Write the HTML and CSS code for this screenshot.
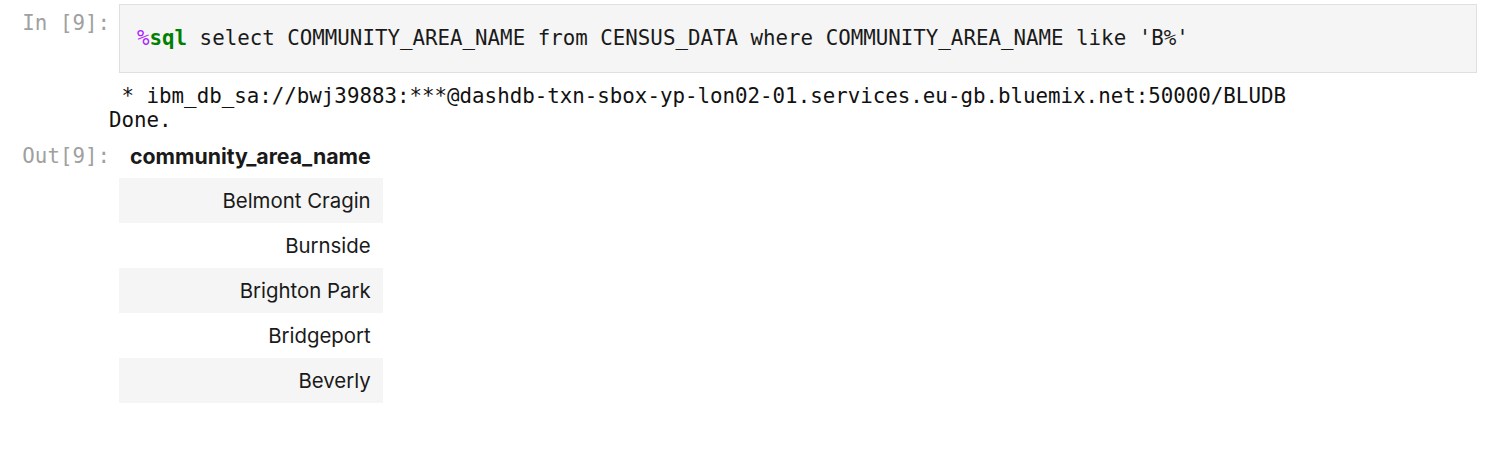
FILE: index.html
```html
<!DOCTYPE html>
<html lang="en">
<head>
<meta charset="utf-8">
<title>Notebook cell</title>
<link rel="stylesheet" href="styles.css">
</head>
<body>
<div class="cell">
  <div class="row input-row">
    <div class="prompt in-prompt">In&nbsp;[9]:</div>
    <div class="input-area"><pre class="code"><span class="cm-op">%</span><span class="cm-kw">sql</span> select COMMUNITY_AREA_NAME from CENSUS_DATA where COMMUNITY_AREA_NAME like 'B%'</pre></div>
  </div>
  <div class="row stream-row">
    <div class="prompt"></div>
    <pre class="stream"> * ibm_db_sa://bwj39883:***@dashdb-txn-sbox-yp-lon02-01.services.eu-gb.bluemix.net:50000/BLUDB
Done.</pre>
  </div>
  <div class="row result-row">
    <div class="prompt out-prompt">Out[9]:</div>
    <table class="dataframe">
      <thead>
        <tr><th>community_area_name</th></tr>
      </thead>
      <tbody>
        <tr><td>Belmont Cragin</td></tr>
        <tr><td>Burnside</td></tr>
        <tr><td>Brighton Park</td></tr>
        <tr><td>Bridgeport</td></tr>
        <tr><td>Beverly</td></tr>
      </tbody>
    </table>
  </div>
</div>
</body>
</html>
```
FILE: styles.css
```css
html, body {
  margin: 0;
  padding: 0;
  background: #ffffff;
}

.cell {
  padding-top: 4px;
  display: flex;
  flex-direction: column;
}

.row {
  display: flex;
  align-items: flex-start;
}

.prompt {
  width: 110px;
  padding-right: 9px;
  flex: 0 0 auto;
  text-align: right;
  font-family: "DejaVu Sans Mono", monospace;
  font-size: 20.8px;
  line-height: 24px;
  color: #a0a0a0;
  white-space: nowrap;
}

.in-prompt {
  padding-top: 7px;
}

.input-area {
  width: 1358px;
  box-sizing: border-box;
  border: 1px solid #e0e0e0;
  background: #f5f5f5;
  padding: 21px 16px 22px 17px;
}

.code {
  margin: 0;
  font-family: "DejaVu Sans Mono", monospace;
  font-size: 20.8px;
  line-height: 24px;
  color: #1a1a1a;
  white-space: pre;
}

.cm-op {
  color: #aa22ff;
}

.cm-kw {
  color: #008000;
  font-weight: bold;
}

.stream-row {
  margin-top: 11px;
}

.stream {
  margin: 0 0 0 -10px;
  font-family: "DejaVu Sans Mono", monospace;
  font-size: 20.8px;
  line-height: 24px;
  color: #111111;
  white-space: pre;
}

.result-row {
  margin-top: 2px;
}

.out-prompt {
  padding-top: 10px;
}

.dataframe {
  border-collapse: collapse;
  border-spacing: 0;
  font-family: Inter, "Liberation Sans", sans-serif;
  font-size: 20.4px;
  color: #1a1a1a;
}

.dataframe th,
.dataframe td {
  text-align: right;
  padding: 0 12px 0 11px;
  height: 45px;
  line-height: 45px;
  white-space: nowrap;
}

.dataframe th {
  font-weight: bold;
  font-size: 21.3px;
  height: 44px;
  line-height: 44px;
}

.dataframe tbody tr:nth-child(odd) {
  background: #f5f5f5;
}
```
